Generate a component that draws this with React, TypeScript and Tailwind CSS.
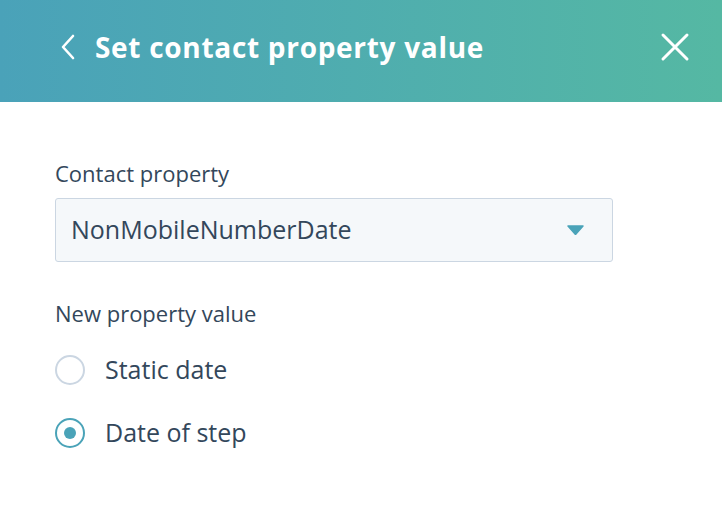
const ChevronLeft = () => (
  <svg width="18" height="26" viewBox="0 0 18 26" fill="none" stroke="white" strokeWidth="2.6" strokeLinecap="round" strokeLinejoin="round">
    <path d="M14 2 L4 13 L14 24" />
  </svg>
);

const CloseIcon = () => (
  <svg width="30" height="30" viewBox="0 0 30 30" fill="none" stroke="white" strokeWidth="3" strokeLinecap="round">
    <path d="M3 3 L27 27 M27 3 L3 27" />
  </svg>
);

const Radio = ({ checked, label }: { checked: boolean; label: string }) => (
  <label className="flex items-center h-[30px] gap-[20px] cursor-pointer">
    <span
      className={`flex items-center justify-center w-[30px] h-[30px] rounded-full border-2 bg-white ${
        checked ? "border-[#4aa3b8]" : "border-[#cbd6e2]"
      }`}
    >
      {checked && <span className="w-[12px] h-[12px] rounded-full bg-[#4aa3b8]" />}
    </span>
    <span className="text-[25px] text-[#33475b]">{label}</span>
  </label>
);

export default function App() {
  return (
    <div className="w-[722px] h-[526px] bg-white font-['Open_Sans',sans-serif] overflow-hidden">
      <header className="h-[102px] flex items-center justify-between pb-[8px] pl-[59px] pr-[32px] bg-gradient-to-r from-[#4aa2b9] to-[#55b8a3]">
        <div className="flex items-center gap-[18px]">
          <ChevronLeft />
          <h1 className="text-[28px] font-bold text-white tracking-[0.7px]">Set contact property value</h1>
        </div>
        <CloseIcon />
      </header>

      <main className="pl-[55px] pt-[58px]">
        <div className="text-[22px] text-[#33475b] leading-[26px]">Contact property</div>
        <div className="mt-[12px] w-[558px] h-[64px] flex items-center justify-between pl-[15px] pr-[28px] bg-[#f5f8fa] border border-[#cbd6e2] rounded-[3px]">
          <span className="text-[25px] text-[#33475b]">NonMobileNumberDate</span>
          <svg width="17" height="10" viewBox="0 0 17 10">
            <path d="M1 1 L16 1 L8.5 9.5 Z" fill="#4aa3b8" stroke="#4aa3b8" strokeWidth="1.5" strokeLinejoin="round" />
          </svg>
        </div>

        <div className="mt-[38px] text-[22px] text-[#33475b] leading-[26px]">New property value</div>
        <div className="mt-[29px] flex flex-col gap-[33px]">
          <Radio checked={false} label="Static date" />
          <Radio checked={true} label="Date of step" />
        </div>
      </main>
    </div>
  );
}
